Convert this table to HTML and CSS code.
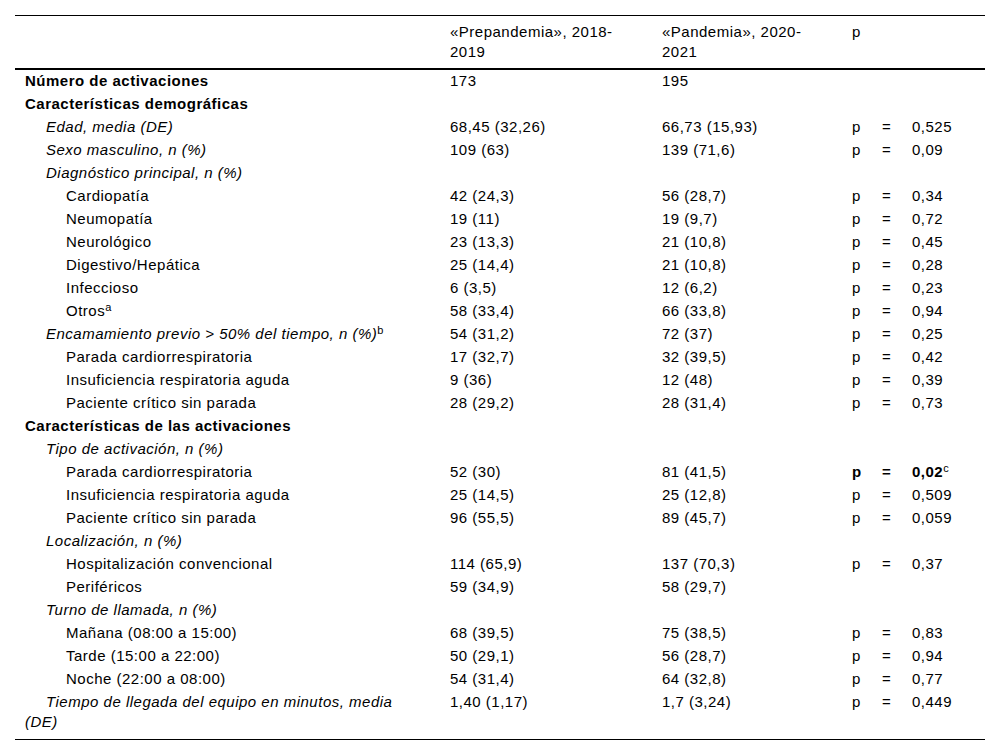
FILE: index.html
```html
<!DOCTYPE html>
<html lang="es">
<head>
<meta charset="utf-8">
<link rel="stylesheet" href="styles.css">
</head>
<body>
<table class="tbl">
  <colgroup>
    <col class="c-label"><col class="c-pre"><col class="c-pan"><col class="c-p"><col class="c-eq"><col class="c-val">
  </colgroup>
  <thead>
    <tr>
      <th></th>
      <th>«Prepandemia», 2018-<br>2019</th>
      <th>«Pandemia», 2020-<br>2021</th>
      <th colspan="3">p</th>
    </tr>
  </thead>
  <tbody>
    <tr><td class="b">Número de activaciones</td><td>173</td><td>195</td><td></td><td></td><td></td></tr>
    <tr><td class="b">Características demográficas</td><td></td><td></td><td></td><td></td><td></td></tr>
    <tr><td class="l1">Edad, media (DE)</td><td>68,45 (32,26)</td><td>66,73 (15,93)</td><td>p</td><td>=</td><td>0,525</td></tr>
    <tr><td class="l1">Sexo masculino, n (%)</td><td>109 (63)</td><td>139 (71,6)</td><td>p</td><td>=</td><td>0,09</td></tr>
    <tr><td class="l1">Diagnóstico principal, n (%)</td><td></td><td></td><td></td><td></td><td></td></tr>
    <tr><td class="l2">Cardiopatía</td><td>42 (24,3)</td><td>56 (28,7)</td><td>p</td><td>=</td><td>0,34</td></tr>
    <tr><td class="l2">Neumopatía</td><td>19 (11)</td><td>19 (9,7)</td><td>p</td><td>=</td><td>0,72</td></tr>
    <tr><td class="l2">Neurológico</td><td>23 (13,3)</td><td>21 (10,8)</td><td>p</td><td>=</td><td>0,45</td></tr>
    <tr><td class="l2">Digestivo/Hepática</td><td>25 (14,4)</td><td>21 (10,8)</td><td>p</td><td>=</td><td>0,28</td></tr>
    <tr><td class="l2">Infeccioso</td><td>6 (3,5)</td><td>12 (6,2)</td><td>p</td><td>=</td><td>0,23</td></tr>
    <tr><td class="l2">Otros<sup>a</sup></td><td>58 (33,4)</td><td>66 (33,8)</td><td>p</td><td>=</td><td>0,94</td></tr>
    <tr><td class="l1">Encamamiento previo &gt; 50% del tiempo, n (%)<sup>b</sup></td><td>54 (31,2)</td><td>72 (37)</td><td>p</td><td>=</td><td>0,25</td></tr>
    <tr><td class="l2">Parada cardiorrespiratoria</td><td>17 (32,7)</td><td>32 (39,5)</td><td>p</td><td>=</td><td>0,42</td></tr>
    <tr><td class="l2">Insuficiencia respiratoria aguda</td><td>9 (36)</td><td>12 (48)</td><td>p</td><td>=</td><td>0,39</td></tr>
    <tr><td class="l2">Paciente crítico sin parada</td><td>28 (29,2)</td><td>28 (31,4)</td><td>p</td><td>=</td><td>0,73</td></tr>
    <tr><td class="b">Características de las activaciones</td><td></td><td></td><td></td><td></td><td></td></tr>
    <tr><td class="l1">Tipo de activación, n (%)</td><td></td><td></td><td></td><td></td><td></td></tr>
    <tr><td class="l2">Parada cardiorrespiratoria</td><td>52 (30)</td><td>81 (41,5)</td><td class="b">p</td><td class="b">=</td><td class="b">0,02<sup class="n">c</sup></td></tr>
    <tr><td class="l2">Insuficiencia respiratoria aguda</td><td>25 (14,5)</td><td>25 (12,8)</td><td>p</td><td>=</td><td>0,509</td></tr>
    <tr><td class="l2">Paciente crítico sin parada</td><td>96 (55,5)</td><td>89 (45,7)</td><td>p</td><td>=</td><td>0,059</td></tr>
    <tr><td class="l1">Localización, n (%)</td><td></td><td></td><td></td><td></td><td></td></tr>
    <tr><td class="l2">Hospitalización convencional</td><td>114 (65,9)</td><td>137 (70,3)</td><td>p</td><td>=</td><td>0,37</td></tr>
    <tr><td class="l2">Periféricos</td><td>59 (34,9)</td><td>58 (29,7)</td><td></td><td></td><td></td></tr>
    <tr><td class="l1">Turno de llamada, n (%)</td><td></td><td></td><td></td><td></td><td></td></tr>
    <tr><td class="l2">Mañana (08:00 a 15:00)</td><td>68 (39,5)</td><td>75 (38,5)</td><td>p</td><td>=</td><td>0,83</td></tr>
    <tr><td class="l2">Tarde (15:00 a 22:00)</td><td>50 (29,1)</td><td>56 (28,7)</td><td>p</td><td>=</td><td>0,94</td></tr>
    <tr><td class="l2">Noche (22:00 a 08:00)</td><td>54 (31,4)</td><td>64 (32,8)</td><td>p</td><td>=</td><td>0,77</td></tr>
    <tr class="last"><td class="l1">Tiempo de llegada del equipo en minutos, media<br>(DE)</td><td>1,40 (1,17)</td><td>1,7 (3,24)</td><td>p</td><td>=</td><td>0,449</td></tr>
  </tbody>
</table>
</body>
</html>
```

FILE: styles.css
```css
html, body {
  margin: 0;
  padding: 0;
  background: #fff;
}
body {
  padding: 15px;
  font-family: "Liberation Sans", Arial, sans-serif;
  font-size: 15px;
  letter-spacing: 0.5px;
  color: #000;
}
.tbl {
  width: 970px;
  border-collapse: collapse;
  table-layout: fixed;
  border-top: 1px solid #000;
  border-bottom: 1px solid #000;
}
.c-label { width: 425px; }
.c-pre { width: 212px; }
.c-pan { width: 190px; }
.c-p { width: 30px; }
.c-eq { width: 30px; }
.c-val { width: 83px; }

.tbl th {
  font-weight: normal;
  text-align: left;
  vertical-align: top;
  line-height: 20px;
  padding: 6px 10px 6px 10px;
  border-bottom: 2px solid #000;
}
.tbl td {
  vertical-align: top;
  line-height: 20px;
  padding: 1px 10px 2px 10px;
  white-space: nowrap;
}
.tbl td.l1 {
  font-style: italic;
  text-indent: 21px;
  white-space: normal;
}
.tbl td.l2 {
  text-indent: 41px;
}
.tbl td.b {
  font-weight: bold;
}
.tbl tr.last td {
  padding-bottom: 7px;
}
sup {
  font-size: 11px;
  line-height: 0;
  vertical-align: 5px;
  font-style: normal;
  letter-spacing: 0;
}
sup.n {
  font-weight: normal;
}
```
